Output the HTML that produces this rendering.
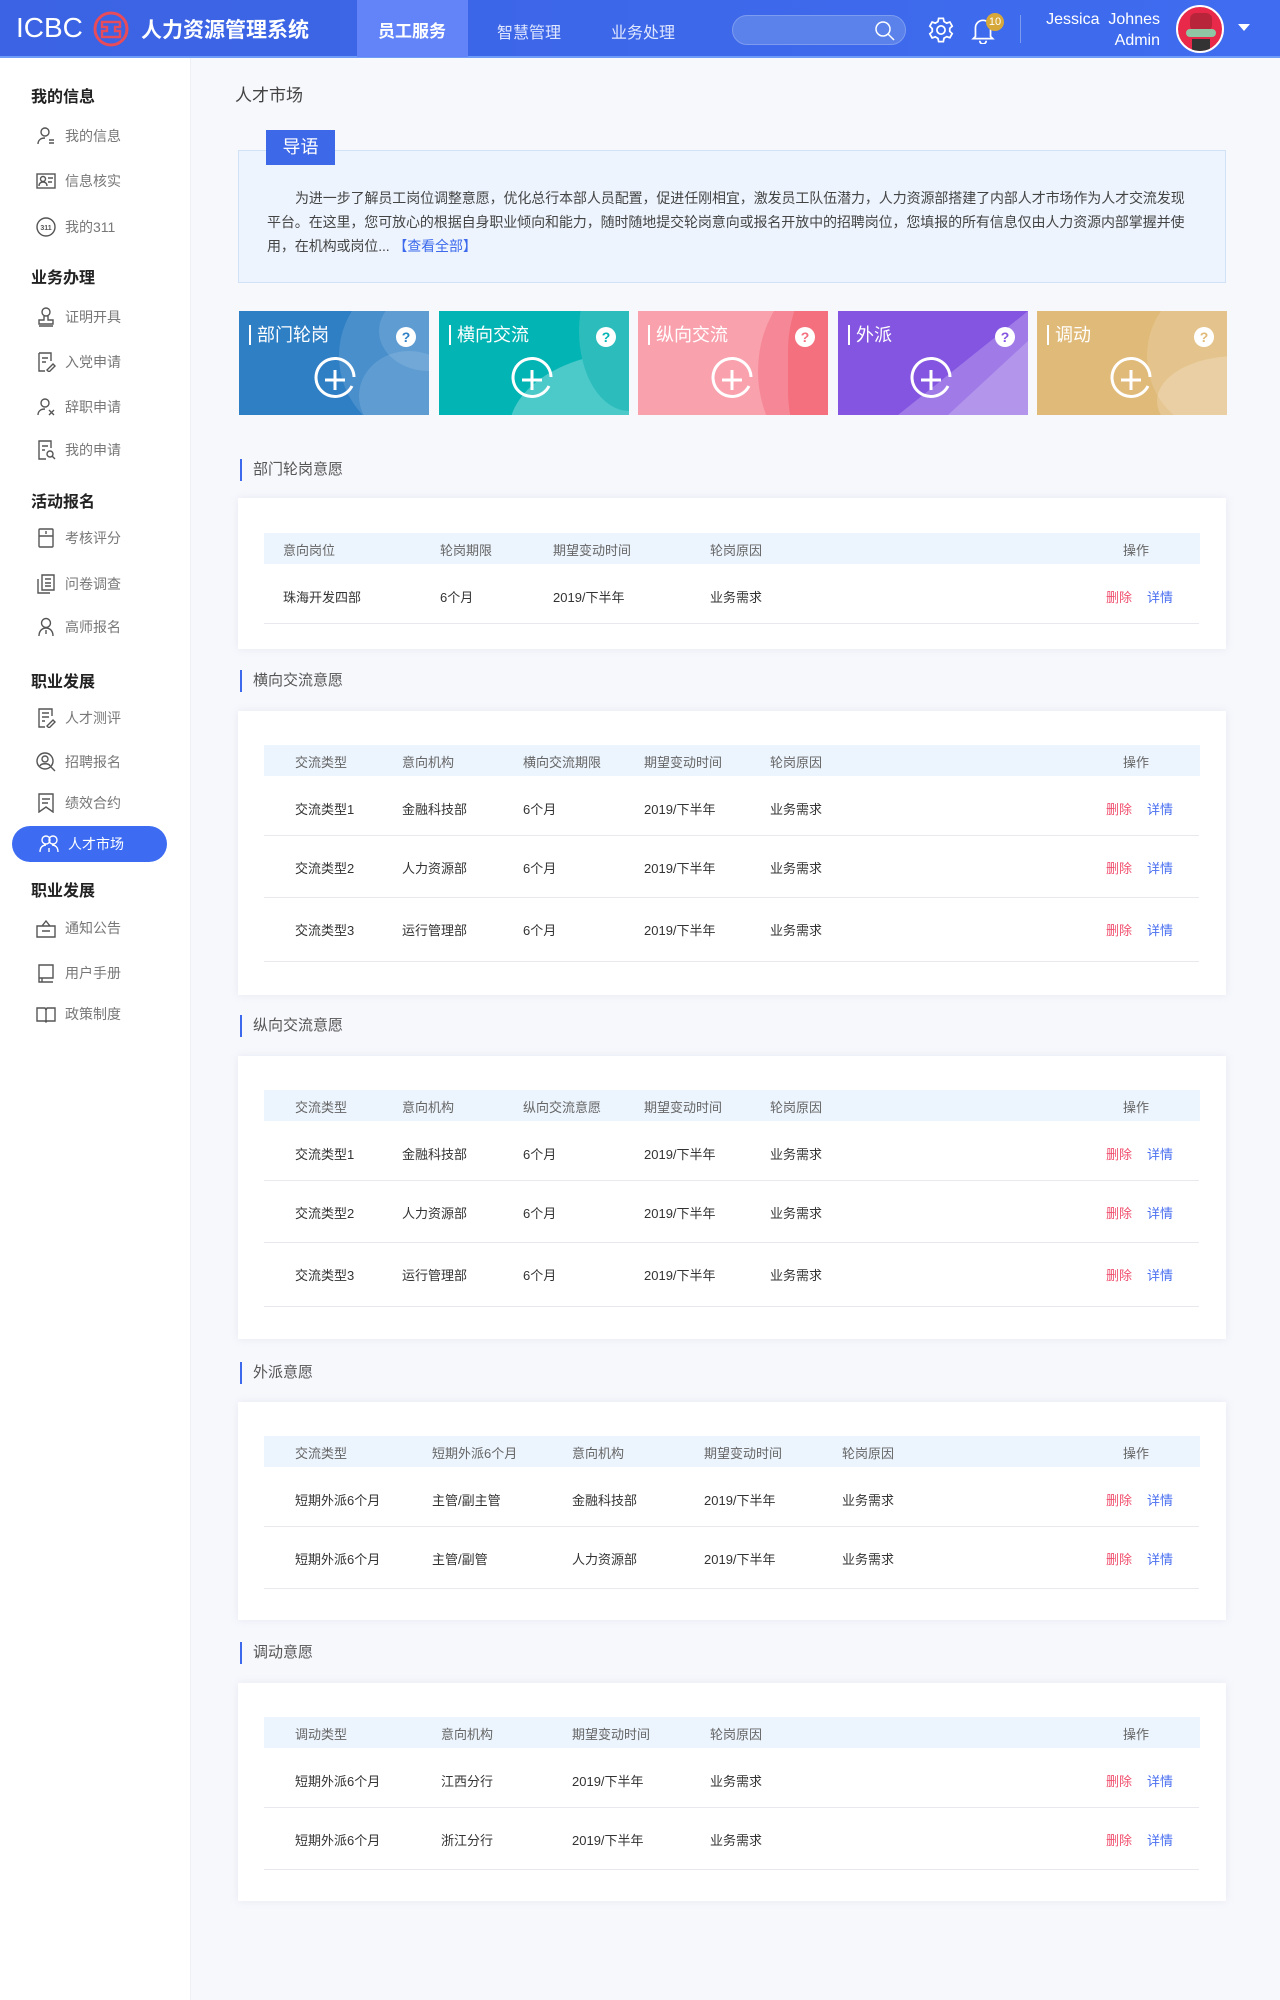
<!DOCTYPE html>
<html><head><meta charset="utf-8"><style>
*{margin:0;padding:0;box-sizing:border-box}
body{width:1280px;height:2000px;background:#f7f8fc;font-family:"Liberation Sans","Noto Sans CJK SC",sans-serif;position:relative;overflow:hidden;color:#333}
.a{position:absolute}
.hdr{left:0;top:0;width:1280px;height:58px;background:linear-gradient(90deg,#3b63e3,#3f6cf0);border-bottom:2px solid #6c9cf7}
.side{left:0;top:58px;width:191px;height:1942px;background:#fff;border-right:1px solid #eef0f5}
.sh{left:31px;font-size:16px;font-weight:bold;color:#222}
.si{left:36px;font-size:14px;color:#777;display:flex;align-items:center;gap:9px}
.si svg{width:20px;height:20px;stroke:#555;fill:none;stroke-width:1.4}
.card{background:#fff;box-shadow:0 0 8px rgba(180,190,220,.25)}
.lab{left:240px;font-size:15px;color:#555;border-left:2px solid #3d6aec;padding-left:11px;line-height:22px}
.th{background:#ecf4fd;height:31px}
.t{position:absolute;font-size:13px;white-space:nowrap}
.hc{color:#666}.rc{color:#333}
.del{color:#f0506e}.det{color:#4a6ff0}
.ln{position:absolute;height:1px;background:#e8e8ee;left:264px;width:935px}
.tile{top:311px;width:190px;height:104px;overflow:hidden;color:#fff}
.tile .tt{position:absolute;left:10px;top:14px;font-size:18px;border-left:2px solid #fff;padding-left:6px;line-height:20px}
.tile .q{position:absolute;left:157px;top:16px;width:20px;height:20px;border-radius:50%;background:#fff;font-size:14px;font-weight:bold;text-align:center;line-height:20px}
</style></head><body>
<div class="a hdr">
 <div class="a" style="left:16px;top:12px;font-size:28px;color:#fff;letter-spacing:0px">ICBC</div>
 <svg class="a" style="left:92px;top:10px" width="38" height="38" viewBox="0 0 38 38"><circle cx="19" cy="19" r="16" fill="none" stroke="#e84b5a" stroke-width="3"/><path d="M10 12h18v5h-5v4h5v6H10v-6h5v-4h-5z" fill="none" stroke="#e84b5a" stroke-width="2.4"/></svg>
 <div class="a" style="left:141px;top:14px;font-size:21px;color:#fff;font-weight:bold">人力资源管理系统</div>
 <div class="a" style="left:357px;top:0;width:111px;height:57px;background:#6383f8"></div>
 <div class="a" style="left:378px;top:17px;font-size:17px;color:#fff;font-weight:bold">员工服务</div>
 <div class="a" style="left:497px;top:19px;font-size:16px;color:#dfe6ff">智慧管理</div>
 <div class="a" style="left:611px;top:19px;font-size:16px;color:#dfe6ff">业务处理</div>
 <div class="a" style="left:732px;top:15px;width:174px;height:30px;border-radius:15px;background:#5a82ea;border:1px solid #7d9cf0"></div>
 <svg class="a" style="left:874px;top:20px" width="22" height="22" viewBox="0 0 22 22" fill="none" stroke="#fff" stroke-width="1.5"><circle cx="9" cy="9" r="7"/><path d="M14 14l6 6"/></svg>
 <svg class="a" style="left:927px;top:16px" width="28" height="28" viewBox="0 0 24 24" fill="none" stroke="#fff" stroke-width="1.5"><circle cx="12" cy="12" r="3.5"/><path d="M10 2h4l.6 2.8 2.3 1.3 2.7-.9 2 3.5-2.1 1.9v2.6l2.1 1.9-2 3.5-2.7-.9-2.3 1.3L14 22h-4l-.6-2.8-2.3-1.3-2.7.9-2-3.5 2.1-1.9v-2.6L2.4 8.7l2-3.5 2.7.9 2.3-1.3z"/></svg>
 <svg class="a" style="left:970px;top:16px" width="26" height="28" viewBox="0 0 24 26" fill="none" stroke="#fff" stroke-width="1.6"><path d="M5 19V11a7 7 0 0114 0v8l2 2H3z"/><path d="M9 23a3 3 0 006 0"/></svg>
 <div class="a" style="left:986px;top:13px;width:18px;height:18px;border-radius:50%;background:#d6a83a;color:#fff;font-size:11px;text-align:center;line-height:18px">10</div>
 <div class="a" style="left:1020px;top:15px;width:1px;height:28px;background:#7d9cf0"></div>
 <div class="a" style="left:1030px;top:9px;width:130px;text-align:right;color:#fff;font-size:16px;line-height:21px">Jessica &nbsp;Johnes<br>Admin</div>
 <div class="a" style="left:1176px;top:5px;width:48px;height:48px;border-radius:50%;background:#e8294a;border:2px solid #fff;overflow:hidden"><div class="a" style="left:12px;top:6px;width:22px;height:18px;background:#b8253a;border-radius:6px"></div><div class="a" style="left:8px;top:22px;width:30px;height:8px;background:#8fc6a4;border-radius:4px"></div><div class="a" style="left:14px;top:32px;width:18px;height:16px;background:#333"></div></div>
 <div class="a" style="left:1238px;top:24px;width:0;height:0;border-left:6px solid transparent;border-right:6px solid transparent;border-top:7px solid #fff"></div>
</div>

<div class="a side"></div>
<div class="a sh" style="top:83px">我的信息</div>
<div class="a si" style="top:126px"><svg viewBox="0 0 20 20"><circle cx="9" cy="6" r="4"/><path d="M2 18c0-4 3-6 7-6M13 14h5M13 17h5"/></svg>我的信息</div>
<div class="a si" style="top:171px"><svg viewBox="0 0 20 20"><rect x="1" y="3" width="18" height="14"/><circle cx="7" cy="8" r="2.5"/><path d="M3 15c0-3 2-4 4-4s4 1 4 4M12 7h5M12 11h4"/></svg>信息核实</div>
<div class="a si" style="top:217px"><svg viewBox="0 0 20 20"><circle cx="10" cy="10" r="9"/><text x="10" y="13" font-size="7" text-anchor="middle" fill="#555" stroke="none" font-weight="bold">311</text></svg>我的311</div>
<div class="a sh" style="top:264px">业务办理</div>
<div class="a si" style="top:307px"><svg viewBox="0 0 20 20"><circle cx="10" cy="5" r="4"/><path d="M8 9v4H3v4h14v-4h-5V9M3 19h14"/></svg>证明开具</div>
<div class="a si" style="top:352px"><svg viewBox="0 0 20 20"><path d="M3 1h12v8M3 1v18h6M6 6h6M6 10h4M11 18l6-6 2 2-6 6z"/></svg>入党申请</div>
<div class="a si" style="top:397px"><svg viewBox="0 0 20 20"><circle cx="9" cy="6" r="4"/><path d="M2 18c0-4 3-6 7-6M13 13l5 5M18 13l-5 5"/></svg>辞职申请</div>
<div class="a si" style="top:440px"><svg viewBox="0 0 20 20"><path d="M15 8V1H3v18h7M6 6h6M6 10h3"/><circle cx="14" cy="14" r="3"/><path d="M16 16l3 3"/></svg>我的申请</div>
<div class="a sh" style="top:488px">活动报名</div>
<div class="a si" style="top:528px"><svg viewBox="0 0 20 20"><rect x="3" y="1" width="14" height="18" rx="1"/><path d="M3 8h14M10 3v3"/></svg>考核评分</div>
<div class="a si" style="top:574px"><svg viewBox="0 0 20 20"><path d="M6 1h12v15H6zM2 5v14h12M9 5h6M9 9h6M9 12h6"/></svg>问卷调查</div>
<div class="a si" style="top:617px"><svg viewBox="0 0 20 20"><circle cx="10" cy="6" r="4.5"/><path d="M3 19c0-5 3-8 7-8s7 3 7 8M10 13v4"/></svg>高师报名</div>
<div class="a sh" style="top:668px">职业发展</div>
<div class="a si" style="top:708px"><svg viewBox="0 0 20 20"><path d="M16 8V1H3v18h6M6 5h7M6 9h7M6 13h3M11 18l6-6 2 2-6 6z"/></svg>人才测评</div>
<div class="a si" style="top:752px"><svg viewBox="0 0 20 20"><circle cx="9" cy="9" r="8"/><circle cx="9" cy="7" r="3"/><path d="M4 14c1-3 9-3 10 0M15 15l4 4"/></svg>招聘报名</div>
<div class="a si" style="top:793px"><svg viewBox="0 0 20 20"><path d="M3 1h14v18l-7-5-7 5zM6 6h8M6 10h6"/></svg>绩效合约</div>
<div class="a" style="left:12px;top:826px;width:155px;height:36px;border-radius:18px;background:#3d6cf2"></div>
<div class="a si" style="top:834px;left:39px;color:#fff"><svg viewBox="0 0 20 20" style="stroke:#fff"><circle cx="7" cy="6" r="4"/><circle cx="14" cy="6" r="4"/><path d="M1 18c0-5 3-7 6-7M19 18c0-5-3-7-6-7M10 14v4"/></svg>人才市场</div>
<div class="a sh" style="top:877px">职业发展</div>
<div class="a si" style="top:918px"><svg viewBox="0 0 20 20"><path d="M1 8h18v11H1zM6 8l4-5 4 5M6 13h8"/></svg>通知公告</div>
<div class="a si" style="top:963px"><svg viewBox="0 0 20 20"><path d="M3 2h14v13H3zM3 2v17h14M6 15v4"/></svg>用户手册</div>
<div class="a si" style="top:1004px"><svg viewBox="0 0 20 20"><path d="M1 4h8l1 2 1-2h8v13h-8l-1 1-1-1H1zM10 6v11"/></svg>政策制度</div>

<div class="a" style="left:235px;top:81px;font-size:17px;color:#444">人才市场</div>
<div class="a" style="left:238px;top:150px;width:988px;height:133px;background:#edf4fd;border:1px solid #cfe2f8"></div>
<div class="a" style="left:266px;top:130px;width:69px;height:35px;background:#3d68e8;color:#fff;font-size:18px;text-align:center;line-height:35px">导语</div>
<div class="a" style="left:267px;top:186px;width:928px;font-size:14px;line-height:24px;color:#444;text-indent:28px;letter-spacing:-0.1px">为进一步了解员工岗位调整意愿，优化总行本部人员配置，促进任刚相宜，激发员工队伍潜力，人力资源部搭建了内部人才市场作为人才交流发现平台。在这里，您可放心的根据自身职业倾向和能力，随时随地提交轮岗意向或报名开放中的招聘岗位，您填报的所有信息仅由人力资源内部掌握并使用，在机构或岗位... <span style="color:#3d6aec">【查看全部】</span></div>

<div class="a tile" style="left:239px;background:#2f7fc5"><div class="a" style="left:100px;top:-40px;width:170px;height:170px;border-radius:50%;background:rgba(255,255,255,.13)"></div><div class="a" style="left:140px;top:-20px;width:100px;height:80px;border-radius:50%;background:rgba(255,255,255,.12)"></div><div class="a" style="left:120px;top:40px;width:100px;height:90px;border-radius:50%;background:rgba(255,255,255,.12)"></div><div class="tt">部门轮岗</div><div class="q" style="color:#2f7fc5">?</div></div>
<div class="a tile" style="left:439px;background:#03b4b4"><div class="a" style="left:70px;top:40px;width:260px;height:160px;border-radius:50%;background:#4ccac9"></div><div class="a" style="left:140px;top:-60px;width:100px;height:160px;border-radius:50%;background:#2cbcbc"></div><div class="tt">横向交流</div><div class="q" style="color:#03b4b4">?</div></div>
<div class="a tile" style="left:638px;background:#f9a2ae"><div class="a" style="left:120px;top:-40px;width:160px;height:200px;border-radius:50%;background:#f68797"></div><div class="a" style="left:150px;top:-40px;width:120px;height:200px;background:#f4707f;border-radius:40% 0 0 40%"></div><div class="tt">纵向交流</div><div class="q" style="color:#f4707f">?</div></div>
<div class="a tile" style="left:838px;background:#8455e0"><svg class="a" style="left:0;top:0" width="190" height="104"><polygon points="190,0 60,104 190,104" fill="#a07be8"/><polygon points="190,30 110,104 190,104" fill="#b396ec"/></svg><div class="tt">外派</div><div class="q" style="color:#8455e0">?</div></div>
<div class="a tile" style="left:1037px;background:#e0ba78"><div class="a" style="left:110px;top:-30px;width:140px;height:150px;border-radius:50%;background:rgba(255,255,255,.15)"></div><div class="a" style="left:120px;top:45px;width:160px;height:90px;border-radius:50%;background:rgba(255,255,255,.2)"></div><div class="tt">调动</div><div class="q" style="color:#e0ba78">?</div></div>
<svg class="a" style="left:0;top:0" width="1280" height="430"><g fill="none" stroke="#fff" stroke-width="3"><g id="pl"><path d="M352 386a19 19 0 1 1 2-9"/><path d="M335 370v20M325 380h20"/></g><use href="#pl" x="197"/><use href="#pl" x="397"/><use href="#pl" x="596"/><use href="#pl" x="796"/></g></svg>

<!-- section 1 -->
<div class="a lab" style="top:459px">部门轮岗意愿</div>
<div class="a card" style="left:238px;top:498px;width:988px;height:151px"></div>
<div class="a th" style="left:264px;top:533px;width:936px"></div>
<div class="t hc" style="left:283px;top:540px">意向岗位</div><div class="t hc" style="left:440px;top:540px">轮岗期限</div><div class="t hc" style="left:553px;top:540px">期望变动时间</div><div class="t hc" style="left:710px;top:540px">轮岗原因</div><div class="t hc" style="left:1123px;top:540px">操作</div>
<div class="t rc" style="left:283px;top:587px">珠海开发四部</div><div class="t rc" style="left:440px;top:587px">6个月</div><div class="t rc" style="left:553px;top:587px">2019/下半年</div><div class="t rc" style="left:710px;top:587px">业务需求</div><div class="t del" style="left:1106px;top:587px">删除</div><div class="t det" style="left:1147px;top:587px">详情</div>
<div class="ln" style="top:623px"></div>

<!-- section 2 -->
<div class="a lab" style="top:670px">横向交流意愿</div>
<div class="a card" style="left:238px;top:711px;width:988px;height:284px"></div>
<div class="a th" style="left:264px;top:745px;width:936px"></div>
<div class="t hc" style="left:295px;top:752px">交流类型</div><div class="t hc" style="left:402px;top:752px">意向机构</div><div class="t hc" style="left:523px;top:752px">横向交流期限</div><div class="t hc" style="left:644px;top:752px">期望变动时间</div><div class="t hc" style="left:770px;top:752px">轮岗原因</div><div class="t hc" style="left:1123px;top:752px">操作</div>
<div class="t rc" style="left:295px;top:799px">交流类型1</div><div class="t rc" style="left:402px;top:799px">金融科技部</div><div class="t rc" style="left:523px;top:799px">6个月</div><div class="t rc" style="left:644px;top:799px">2019/下半年</div><div class="t rc" style="left:770px;top:799px">业务需求</div><div class="t del" style="left:1106px;top:799px">删除</div><div class="t det" style="left:1147px;top:799px">详情</div>
<div class="ln" style="top:835px"></div>
<div class="t rc" style="left:295px;top:858px">交流类型2</div><div class="t rc" style="left:402px;top:858px">人力资源部</div><div class="t rc" style="left:523px;top:858px">6个月</div><div class="t rc" style="left:644px;top:858px">2019/下半年</div><div class="t rc" style="left:770px;top:858px">业务需求</div><div class="t del" style="left:1106px;top:858px">删除</div><div class="t det" style="left:1147px;top:858px">详情</div>
<div class="ln" style="top:897px"></div>
<div class="t rc" style="left:295px;top:920px">交流类型3</div><div class="t rc" style="left:402px;top:920px">运行管理部</div><div class="t rc" style="left:523px;top:920px">6个月</div><div class="t rc" style="left:644px;top:920px">2019/下半年</div><div class="t rc" style="left:770px;top:920px">业务需求</div><div class="t del" style="left:1106px;top:920px">删除</div><div class="t det" style="left:1147px;top:920px">详情</div>
<div class="ln" style="top:961px"></div>

<!-- section 3 -->
<div class="a lab" style="top:1015px">纵向交流意愿</div>
<div class="a card" style="left:238px;top:1056px;width:988px;height:283px"></div>
<div class="a th" style="left:264px;top:1090px;width:936px"></div>
<div class="t hc" style="left:295px;top:1097px">交流类型</div><div class="t hc" style="left:402px;top:1097px">意向机构</div><div class="t hc" style="left:523px;top:1097px">纵向交流意愿</div><div class="t hc" style="left:644px;top:1097px">期望变动时间</div><div class="t hc" style="left:770px;top:1097px">轮岗原因</div><div class="t hc" style="left:1123px;top:1097px">操作</div>
<div class="t rc" style="left:295px;top:1144px">交流类型1</div><div class="t rc" style="left:402px;top:1144px">金融科技部</div><div class="t rc" style="left:523px;top:1144px">6个月</div><div class="t rc" style="left:644px;top:1144px">2019/下半年</div><div class="t rc" style="left:770px;top:1144px">业务需求</div><div class="t del" style="left:1106px;top:1144px">删除</div><div class="t det" style="left:1147px;top:1144px">详情</div>
<div class="ln" style="top:1180px"></div>
<div class="t rc" style="left:295px;top:1203px">交流类型2</div><div class="t rc" style="left:402px;top:1203px">人力资源部</div><div class="t rc" style="left:523px;top:1203px">6个月</div><div class="t rc" style="left:644px;top:1203px">2019/下半年</div><div class="t rc" style="left:770px;top:1203px">业务需求</div><div class="t del" style="left:1106px;top:1203px">删除</div><div class="t det" style="left:1147px;top:1203px">详情</div>
<div class="ln" style="top:1242px"></div>
<div class="t rc" style="left:295px;top:1265px">交流类型3</div><div class="t rc" style="left:402px;top:1265px">运行管理部</div><div class="t rc" style="left:523px;top:1265px">6个月</div><div class="t rc" style="left:644px;top:1265px">2019/下半年</div><div class="t rc" style="left:770px;top:1265px">业务需求</div><div class="t del" style="left:1106px;top:1265px">删除</div><div class="t det" style="left:1147px;top:1265px">详情</div>
<div class="ln" style="top:1306px"></div>

<!-- section 4 -->
<div class="a lab" style="top:1362px">外派意愿</div>
<div class="a card" style="left:238px;top:1402px;width:988px;height:218px"></div>
<div class="a th" style="left:264px;top:1436px;width:936px"></div>
<div class="t hc" style="left:295px;top:1443px">交流类型</div><div class="t hc" style="left:432px;top:1443px">短期外派6个月</div><div class="t hc" style="left:572px;top:1443px">意向机构</div><div class="t hc" style="left:704px;top:1443px">期望变动时间</div><div class="t hc" style="left:842px;top:1443px">轮岗原因</div><div class="t hc" style="left:1123px;top:1443px">操作</div>
<div class="t rc" style="left:295px;top:1490px">短期外派6个月</div><div class="t rc" style="left:432px;top:1490px">主管/副主管</div><div class="t rc" style="left:572px;top:1490px">金融科技部</div><div class="t rc" style="left:704px;top:1490px">2019/下半年</div><div class="t rc" style="left:842px;top:1490px">业务需求</div><div class="t del" style="left:1106px;top:1490px">删除</div><div class="t det" style="left:1147px;top:1490px">详情</div>
<div class="ln" style="top:1526px"></div>
<div class="t rc" style="left:295px;top:1549px">短期外派6个月</div><div class="t rc" style="left:432px;top:1549px">主管/副管</div><div class="t rc" style="left:572px;top:1549px">人力资源部</div><div class="t rc" style="left:704px;top:1549px">2019/下半年</div><div class="t rc" style="left:842px;top:1549px">业务需求</div><div class="t del" style="left:1106px;top:1549px">删除</div><div class="t det" style="left:1147px;top:1549px">详情</div>
<div class="ln" style="top:1588px"></div>

<!-- section 5 -->
<div class="a lab" style="top:1642px">调动意愿</div>
<div class="a card" style="left:238px;top:1683px;width:988px;height:218px"></div>
<div class="a th" style="left:264px;top:1717px;width:936px"></div>
<div class="t hc" style="left:295px;top:1724px">调动类型</div><div class="t hc" style="left:441px;top:1724px">意向机构</div><div class="t hc" style="left:572px;top:1724px">期望变动时间</div><div class="t hc" style="left:710px;top:1724px">轮岗原因</div><div class="t hc" style="left:1123px;top:1724px">操作</div>
<div class="t rc" style="left:295px;top:1771px">短期外派6个月</div><div class="t rc" style="left:441px;top:1771px">江西分行</div><div class="t rc" style="left:572px;top:1771px">2019/下半年</div><div class="t rc" style="left:710px;top:1771px">业务需求</div><div class="t del" style="left:1106px;top:1771px">删除</div><div class="t det" style="left:1147px;top:1771px">详情</div>
<div class="ln" style="top:1807px"></div>
<div class="t rc" style="left:295px;top:1830px">短期外派6个月</div><div class="t rc" style="left:441px;top:1830px">浙江分行</div><div class="t rc" style="left:572px;top:1830px">2019/下半年</div><div class="t rc" style="left:710px;top:1830px">业务需求</div><div class="t del" style="left:1106px;top:1830px">删除</div><div class="t det" style="left:1147px;top:1830px">详情</div>
<div class="ln" style="top:1869px"></div>
</body></html>
